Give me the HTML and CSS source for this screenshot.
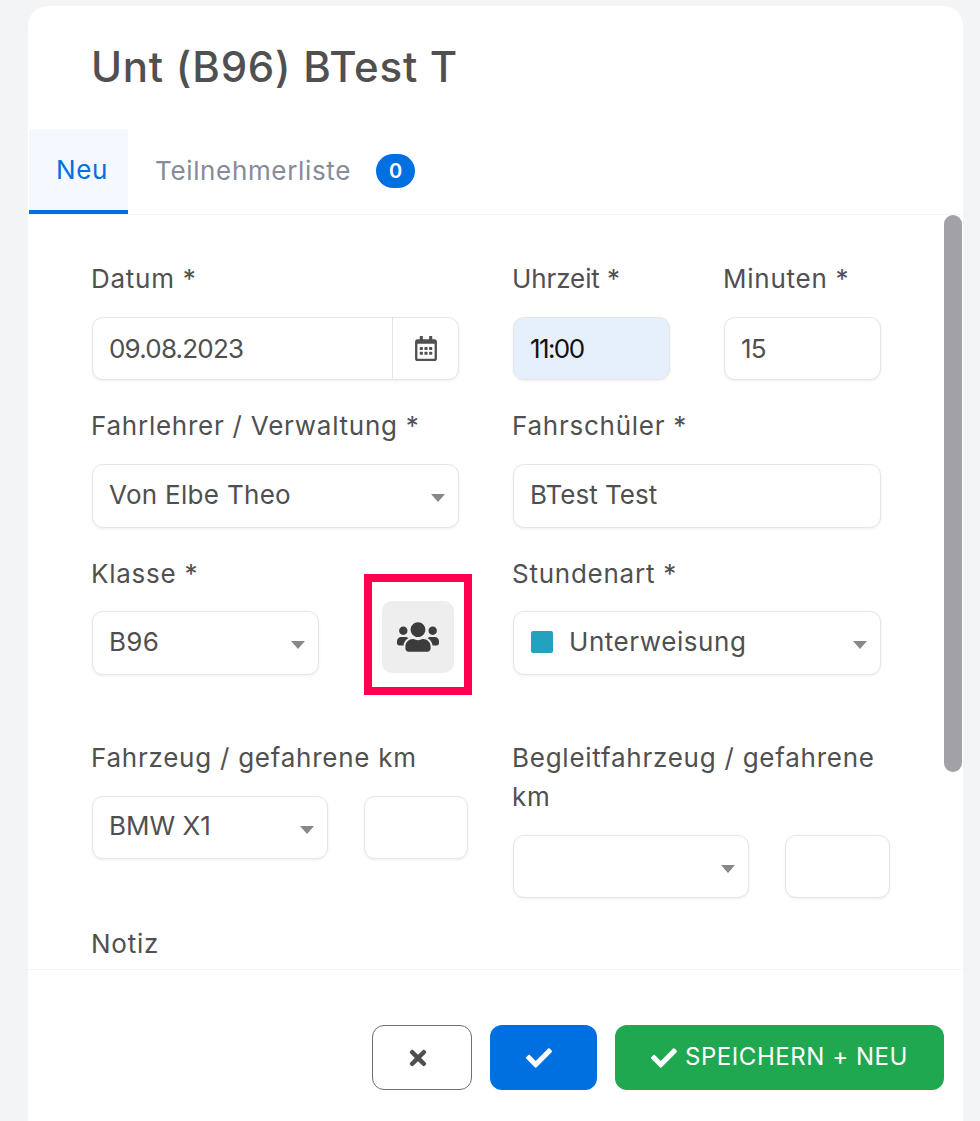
FILE: index.html
```html
<!DOCTYPE html>
<html lang="de">
<head>
<meta charset="utf-8">
<title>Unterweisung</title>
<link rel="stylesheet" href="styles.css">
</head>
<body>
<main class="card">
  <h1 class="title">Unt (B96) BTest T</h1>
  <nav class="tabs">
    <a class="tab tab-active">Neu</a>
    <a class="tab">Teilnehmerliste <span class="badge">0</span></a>
  </nav>
  <div class="body">
    <div class="scrollbar"></div>
    <form class="form">
      <div class="row">
        <div class="field">
          <label class="label">Datum *</label>
          <div class="control date">
            <span class="value value-num date-value">09.08.2023</span>
            <span class="date-btn">
              <svg class="icon-cal" viewBox="0 0 448 512"><path d="M148 288h-40c-6.600 0-12-5.400-12-12v-40c0-6.600 5.400-12 12-12h40c6.600 0 12 5.400 12 12v40c0 6.600-5.400 12-12 12zm108-12v-40c0-6.600-5.400-12-12-12h-40c-6.600 0-12 5.400-12 12v40c0 6.600 5.400 12 12 12h40c6.600 0 12-5.400 12-12zm96 0v-40c0-6.600-5.400-12-12-12h-40c-6.600 0-12 5.400-12 12v40c0 6.600 5.400 12 12 12h40c6.600 0 12-5.400 12-12zm-96 96v-40c0-6.600-5.400-12-12-12h-40c-6.600 0-12 5.400-12 12v40c0 6.600 5.400 12 12 12h40c6.600 0 12-5.400 12-12zm-96 0v-40c0-6.600-5.400-12-12-12h-40c-6.600 0-12 5.400-12 12v40c0 6.600 5.400 12 12 12h40c6.600 0 12-5.400 12-12zm192 0v-40c0-6.600-5.400-12-12-12h-40c-6.600 0-12 5.400-12 12v40c0 6.600 5.400 12 12 12h40c6.600 0 12-5.400 12-12zm96-260v352c0 26.500-21.500 48-48 48H48c-26.500 0-48-21.500-48-48V112c0-26.500 21.500-48 48-48h48V12c0-6.600 5.400-12 12-12h40c6.600 0 12 5.400 12 12v52h128V12c0-6.600 5.400-12 12-12h40c6.600 0 12 5.400 12 12v52h48c26.500 0 48 21.500 48 48zm-48 346V160H48v298c0 3.300 2.700 6 6 6h340c3.300 0 6-2.700 6-6z"/></svg>
            </span>
          </div>
        </div>
        <div class="split-half">
          <div class="field">
            <label class="label label-tight">Uhrzeit *</label>
            <div class="control autofill"><span class="value value-time">11:00</span></div>
          </div>
          <div class="field">
            <label class="label">Minuten *</label>
            <div class="control"><span class="value value-num">15</span></div>
          </div>
        </div>
      </div>

      <div class="row">
        <div class="field">
          <label class="label">Fahrlehrer / Verwaltung *</label>
          <div class="control select tall"><span class="value">Von Elbe Theo</span><i class="caret"></i></div>
        </div>
        <div class="field">
          <label class="label">Fahrschüler *</label>
          <div class="control tall"><span class="value value-short">BTest Test</span></div>
        </div>
      </div>

      <div class="row row-class">
        <div class="split-class">
          <div class="field">
            <label class="label label-close">Klasse *</label>
            <div class="control select tall"><span class="value">B96</span><i class="caret"></i></div>
          </div>
          <div class="highlight">
            <button type="button" class="group-btn">
              <svg class="icon-users" viewBox="0 0 640 512"><path d="M96 224c35.300 0 64-28.700 64-64s-28.700-64-64-64-64 28.700-64 64 28.700 64 64 64zm448 0c35.300 0 64-28.700 64-64s-28.700-64-64-64-64 28.700-64 64 28.700 64 64 64zm32 32h-64c-17.600 0-33.500 7.100-45.100 18.600 40.300 22.100 68.900 62 75.100 109.400h66c17.700 0 32-14.300 32-32v-32c0-35.300-28.700-64-64-64zm-256 0c61.900 0 112-50.100 112-112S381.900 32 320 32 208 82.100 208 144s50.100 112 112 112zm76.800 32h-8.300c-20.800 10-43.900 16-68.500 16s-47.600-6-68.500-16h-8.300C179.600 288 128 339.600 128 403.200V432c0 26.500 21.500 48 48 48h288c26.500 0 48-21.500 48-48v-28.800c0-63.600-51.600-115.200-115.200-115.200zm-223.700-13.400C161.500 263.100 145.600 256 128 256H64c-35.300 0-64 28.700-64 64v32c0 17.700 14.300 32 32 32h65.900c6.300-47.400 34.900-87.300 75.200-109.400z"/></svg>
            </button>
          </div>
        </div>
        <div class="field">
          <label class="label label-close">Stundenart *</label>
          <div class="control select tall"><span class="swatch"></span><span class="value value-wide">Unterweisung</span><i class="caret"></i></div>
        </div>
      </div>

      <div class="row">
        <div class="field">
          <label class="label">Fahrzeug / gefahrene km</label>
          <div class="split-km">
            <div class="control select"><span class="value value-short">BMW X1</span><i class="caret"></i></div>
            <div class="control"></div>
          </div>
        </div>
        <div class="field">
          <label class="label">Begleitfahrzeug / gefahrene km</label>
          <div class="split-km split-km-wide">
            <div class="control select"><i class="caret"></i></div>
            <div class="control"></div>
          </div>
        </div>
      </div>

      <div class="field">
        <label class="label">Notiz</label>
      </div>
    </form>
  </div>
  <footer class="footer">
    <button type="button" class="btn btn-cancel">
      <svg class="icon-times" viewBox="0 0 352 512"><path d="M242.720 256l100.070-100.070c12.280-12.280 12.280-32.190 0-44.480l-22.240-22.240c-12.280-12.280-32.190-12.280-44.480 0L176 189.280 75.930 89.210c-12.280-12.280-32.190-12.280-44.480 0L9.210 111.450c-12.280 12.280-12.280 32.190 0 44.480L109.280 256 9.210 356.070c-12.280 12.280-12.280 32.190 0 44.480l22.240 22.240c12.280 12.280 32.200 12.280 44.480 0L176 322.720l100.070 100.070c12.280 12.280 32.200 12.280 44.480 0l22.240-22.240c12.280-12.280 12.280-32.190 0-44.480L242.720 256z"/></svg>
    </button>
    <button type="button" class="btn btn-save">
      <svg class="icon-check" viewBox="0 0 512 512"><path d="M173.898 439.404l-166.400-166.400c-9.997-9.997-9.997-26.206 0-36.204l36.203-36.204c9.997-9.998 26.207-9.998 36.204 0L192 312.690 432.095 72.596c9.997-9.997 26.207-9.997 36.204 0l36.203 36.204c9.997 9.997 9.997 26.206 0 36.204l-294.400 294.401c-9.998 9.997-26.207 9.997-36.204-.001z"/></svg>
    </button>
    <button type="button" class="btn btn-new">
      <svg class="icon-check" viewBox="0 0 512 512"><path d="M173.898 439.404l-166.400-166.400c-9.997-9.997-9.997-26.206 0-36.204l36.203-36.204c9.997-9.998 26.207-9.998 36.204 0L192 312.690 432.095 72.596c9.997-9.997 26.207-9.997 36.204 0l36.203 36.204c9.997 9.997 9.997 26.206 0 36.204l-294.400 294.401c-9.998 9.997-26.207 9.997-36.204-.001z"/></svg>
      <span class="btn-text">SPEICHERN + NEU</span>
    </button>
  </footer>
</main>
</body>
</html>
```
FILE: styles.css
```css
* { box-sizing: border-box; }
html, body { margin: 0; height: 100%; }
body {
  background: #f3f4f6;
  font-family: Inter, "Noto Sans", sans-serif;
  color: #4f4f4f;
  overflow: hidden;
}
.card {
  margin: 6px 0 0 28px;
  width: 935px;
  height: 1115px;
  background: #fff;
  border-radius: 20px 20px 0 0;
  overflow: hidden;
}
.title {
  margin: 0;
  padding: 31px 0 0 63px;
  height: 123px;
  font-size: 42px;
  line-height: 60px;
  font-weight: 500;
  letter-spacing: 0.75px;
  color: #505050;
}
.tabs {
  display: flex;
  height: 86px;
  border-bottom: 1px solid #f5f5f7;
}
.tab {
  display: flex;
  align-items: center;
  gap: 25px;
  padding: 0 0 2px 27px;
  font-size: 26px;
  letter-spacing: 0.65px;
  color: #858b9a;
}
.tab-active {
  width: 99px;
  margin-left: 1px;
  padding-bottom: 0;
  color: #0070e0;
  background: #f5f9ff;
  border-bottom: 4px solid #0070e0;
  height: 85px;
}
.badge {
  display: inline-flex;
  align-items: center;
  justify-content: center;
  width: 39px;
  height: 34px;
  border-radius: 17px;
  background: #0070e0;
  color: #fff;
  font-size: 20px;
  font-weight: 600;
  letter-spacing: 0;
}
.body {
  position: relative;
  height: 755px;
  overflow: hidden;
  border-bottom: 1px solid #f5f5f7;
}
.scrollbar {
  position: absolute;
  top: 0;
  left: 916px;
  width: 18px;
  height: 557px;
  background: #a1a1a6;
  border-radius: 9px;
}
.form { padding: 44px 0 0 64px; width: 862px; }
.row {
  display: grid;
  grid-template-columns: 367px 368px;
  column-gap: 54px;
  align-items: start;
  margin-bottom: 26px;
}
.row-class { margin-bottom: 43px; }
.split-half {
  display: grid;
  grid-template-columns: 157px 157px;
  column-gap: 54px;
}
.split-class {
  display: grid;
  grid-template-columns: 227px 108px;
  column-gap: 45px;
}
.split-km {
  display: grid;
  grid-template-columns: 236px 104px;
  column-gap: 36px;
}
.split-km-wide { grid-template-columns: 236px 105px; }
.label {
  display: block;
  margin: 0 0 19px -1px;
  font-size: 26px;
  line-height: 39px;
  letter-spacing: 0.75px;
  color: #505050;
}
.label-tight { letter-spacing: -0.1px; }
.label-close { margin-bottom: 18px; }
.control {
  position: relative;
  display: flex;
  align-items: center;
  height: 63px;
  padding: 0 16px;
  background: #fff;
  border: 1px solid #e4e6ea;
  border-radius: 11px;
  box-shadow: 0 1px 3px rgba(0, 0, 0, 0.07);
}
.tall { height: 64px; padding-bottom: 2px; }
.select { padding-bottom: 3px; }
.value {
  font-size: 26px;
  line-height: 38px;
  letter-spacing: 0.3px;
  color: #4f4f4f;
}
.value-short { letter-spacing: 0; }
.value-wide { letter-spacing: 0.55px; }
.value-num { letter-spacing: -0.8px; }
.value-time { letter-spacing: -1.6px; color: #111; }
.autofill { background: #e6f0fd; }
.date { padding: 0; }
.date-value { flex: 1; padding-left: 16px; }
.date-btn {
  display: flex;
  align-items: center;
  justify-content: center;
  width: 66px;
  height: 100%;
  border-left: 1px solid #e4e6ea;
}
.icon-cal { width: 22px; height: 25px; fill: #505050; }
.caret {
  position: absolute;
  right: 13px;
  top: 29px;
  border-style: solid;
  border-width: 8px 7px 0;
  border-color: #888 transparent transparent;
}
.swatch {
  width: 22px;
  height: 22px;
  margin: 0 16px 0 1px;
  background: #22a2bf;
  border-radius: 2px;
}
.highlight {
  margin-top: 20px;
  padding: 19px 10px;
  height: 121px;
  border: 8px solid #ff0050;
}
.group-btn {
  display: flex;
  align-items: center;
  justify-content: center;
  width: 72px;
  height: 72px;
  padding: 0;
  background: #eeeeee;
  border: 0;
  border-radius: 10px;
}
.icon-users { width: 42px; height: 34px; fill: #3c3c3c; }
.footer {
  display: flex;
  justify-content: flex-end;
  gap: 18px;
  padding: 55px 19px 0 0;
}
.btn {
  display: flex;
  align-items: center;
  justify-content: center;
  height: 65px;
  padding: 0;
  border: 0;
  border-radius: 12px;
  font-family: inherit;
}
.btn-cancel {
  width: 100px;
  padding-right: 9px;
  background: #fff;
  border: 1px solid #6f6f6f;
}
.btn-save { width: 107px; padding-right: 9px; background: #0070e0; }
.btn-new {
  width: 329px;
  gap: 8px;
  background: #1fa84f;
  color: #fff;
  font-size: 24px;
  letter-spacing: 0.55px;
}
.btn-text { margin-bottom: 2px; }
.icon-times { width: 18px; height: 24px; fill: #4f4f4f; }
.icon-check { width: 26px; height: 26px; fill: #fff; }
```
